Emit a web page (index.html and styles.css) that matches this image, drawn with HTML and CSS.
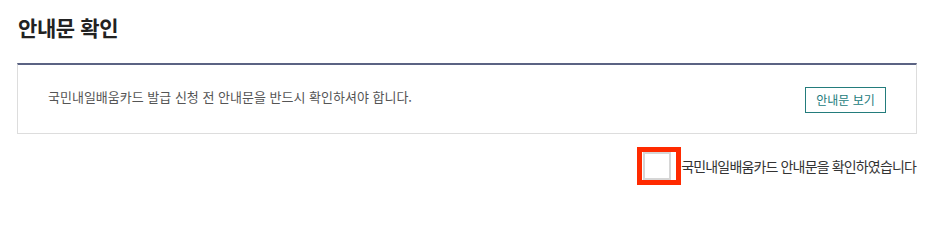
FILE: index.html
```html
<!DOCTYPE html>
<html lang="ko">
<head>
<meta charset="utf-8">
<title>안내문 확인</title>
<link rel="stylesheet" href="styles.css">
</head>
<body>
<div class="page">
  <h2 class="title">안내문 확인</h2>
  <div class="notice">
    <p class="notice-text">국민내일배움카드 발급 신청 전 안내문을 반드시 확인하셔야 합니다.</p>
    <button type="button" class="btn-view">안내문 보기</button>
  </div>
  <div class="agree-row">
    <label class="agree">
      <span class="check-wrap"><span class="check"></span></span>
      <span class="agree-text">국민내일배움카드 안내문을 확인하였습니다</span>
    </label>
  </div>
</div>
</body>
</html>
```
FILE: styles.css
```css
html, body {
  margin: 0;
  padding: 0;
  background: #ffffff;
}
body {
  font-family: "Noto Sans CJK KR", "Noto Sans", sans-serif;
  color: #333333;
}
.page {
  width: 900px;
  padding: 0 14px 0 17px;
}
.title {
  margin: 0;
  padding: 12px 0 0 1px;
  height: 63px;
  box-sizing: border-box;
  font-size: 21px;
  font-weight: 700;
  letter-spacing: -0.4px;
  line-height: 30px;
  color: #222222;
}
.notice {
  display: flex;
  align-items: center;
  justify-content: space-between;
  height: 71px;
  box-sizing: border-box;
  border: 1px solid #dddddd;
  border-top: 2px solid #5b6383;
  padding: 0 30px;
  background: #ffffff;
}
.notice-text {
  margin: 0 0 4px 0;
  font-size: 13px;
  letter-spacing: 0;
  color: #555555;
  line-height: 20px;
}
.btn-view {
  width: 81px;
  height: 26px;
  box-sizing: border-box;
  border: 1px solid #237c7c;
  background: #ffffff;
  color: #237c7c;
  font-family: "Noto Sans CJK KR", sans-serif;
  font-size: 12px;
  letter-spacing: 0;
  padding: 0;
  line-height: 22px;
  margin-top: 1px;
}
.agree-row {
  display: flex;
  justify-content: flex-end;
  margin-top: 13px;
  padding-right: 1px;
}
.agree {
  display: flex;
  align-items: center;
}
.check-wrap {
  display: flex;
  align-items: center;
  border: 5px solid #ff2a00;
  padding: 0 5px 0 1px;
  height: 28px;
}
.check {
  display: block;
  width: 28px;
  height: 28px;
  box-sizing: border-box;
  border: 2px solid #d6d6d6;
  background: #ffffff;
}
.agree-text {
  font-size: 14px;
  letter-spacing: -0.85px;
  color: #333333;
  line-height: 20px;
}
```
